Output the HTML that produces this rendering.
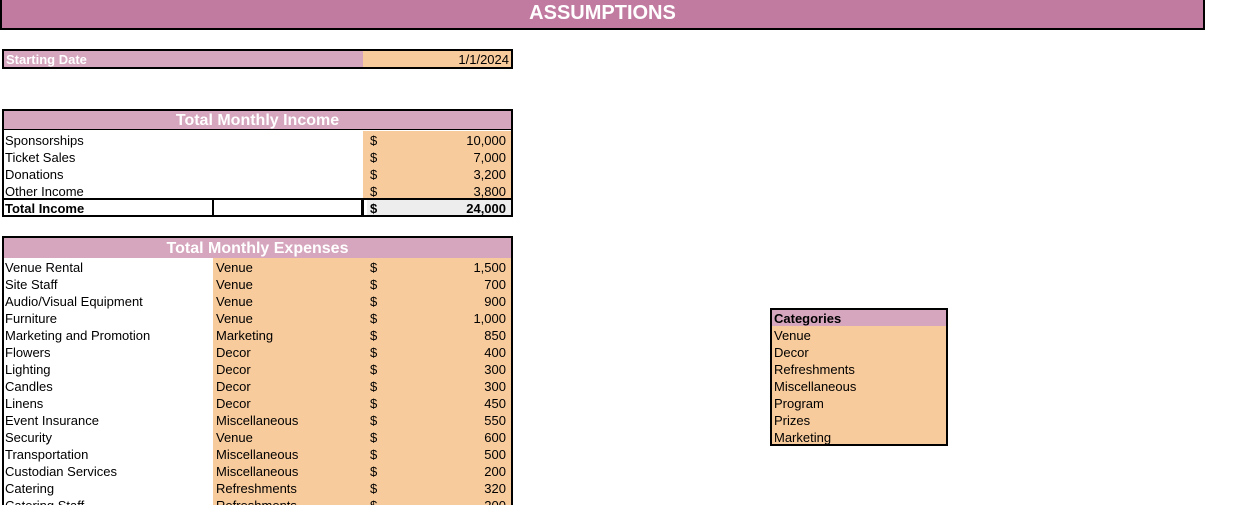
<!DOCTYPE html>
<html><head><meta charset="utf-8"><style>
*{margin:0;padding:0;box-sizing:border-box}
html,body{width:1234px;height:505px;overflow:hidden}
body{background:#fff;position:relative;font-family:"Liberation Sans",Arial,sans-serif;font-size:13px;color:#000}
.a{position:absolute}
.title{left:0;top:0;width:1205px;height:30px;background:#C27BA0;border:2px solid #000;border-top:none;color:#fff;font-weight:bold;font-size:20px;text-align:center;line-height:26px}
.box{border:2px solid #000}
.pk{background:#D5A6BD}
.pe{background:#F8CB9C}
.row{position:absolute;height:17px;line-height:17px;white-space:nowrap}
.hdr{color:#fff;font-weight:bold;font-size:16px;text-align:center}
</style></head><body>
<div class="a title">ASSUMPTIONS</div>

<div class="a box" style="left:2px;top:49px;width:511px;height:20px"></div>
<div class="a pk" style="left:4px;top:51px;width:359px;height:16px;color:#fff;font-weight:bold;line-height:17px;padding-left:2px">Starting Date</div>
<div class="a pe" style="left:363px;top:51px;width:148px;height:16px;line-height:17px;text-align:right;padding-right:2px">1/1/2024</div>

<div class="a box" style="left:2px;top:109px;width:511px;height:108px"></div>
<div class="a pk hdr" style="left:4px;top:111px;width:507px;height:19px;line-height:20px;border-bottom:1px solid #000">Total Monthly Income</div>
<div class="a pe" style="left:363px;top:131px;width:148px;height:68px"></div>
<div class="a" style="left:2px;top:198px;width:511px;height:2px;background:#000"></div>
<div class="a" style="left:212px;top:198px;width:2px;height:19px;background:#000"></div>
<div class="a" style="left:214px;top:215px;width:148px;height:2px;background:#000"></div>
<div class="a" style="left:361px;top:198px;width:3px;height:19px;background:#000"></div>
<div class="a" style="left:367px;top:200px;width:144px;height:15px;background:#EDEDED"></div>

<div class="a box" style="left:2px;top:236px;width:511px;height:280px"></div>
<div class="a pk hdr" style="left:4px;top:238px;width:507px;height:20px;line-height:21px">Total Monthly Expenses</div>
<div class="a pe" style="left:213px;top:258px;width:298px;height:260px"></div>

<div class="a box pe" style="left:770px;top:308px;width:178px;height:138px"></div>
<div class="a pk" style="left:772px;top:310px;width:174px;height:16px"></div>

<script>
function r(x,y,t,s){var d=document.createElement('div');d.className='row';d.style.left=x+'px';d.style.top=(y+1)+'px';d.innerHTML=t;if(s)d.style.cssText+=s;document.body.appendChild(d);}
var inc=[["Sponsorships","10,000"],["Ticket Sales","7,000"],["Donations","3,200"],["Other Income","3,800"]];
inc.forEach(function(v,i){var y=131+i*17;r(5,y,v[0]);r(370,y,"$");r(400,y,v[1],"width:106px;text-align:right");});
r(5,199,"Total Income","font-weight:bold");r(370,199,"$","font-weight:bold");r(400,199,"24,000","width:106px;text-align:right;font-weight:bold");
var ex=[["Venue Rental","Venue","1,500"],["Site Staff","Venue","700"],["Audio/Visual Equipment","Venue","900"],["Furniture","Venue","1,000"],["Marketing and Promotion","Marketing","850"],["Flowers","Decor","400"],["Lighting","Decor","300"],["Candles","Decor","300"],["Linens","Decor","450"],["Event Insurance","Miscellaneous","550"],["Security","Venue","600"],["Transportation","Miscellaneous","500"],["Custodian Services","Miscellaneous","200"],["Catering","Refreshments","320"],["Catering Staff","Refreshments","200"]];
ex.forEach(function(v,i){var y=258+i*17;r(5,y,v[0]);r(216,y,v[1]);r(370,y,"$");r(400,y,v[2],"width:106px;text-align:right");});
r(774,309,"Categories","font-weight:bold");
["Venue","Decor","Refreshments","Miscellaneous","Program","Prizes","Marketing"].forEach(function(c,i){r(774,326+i*17,c);});
</script>
</body></html>
